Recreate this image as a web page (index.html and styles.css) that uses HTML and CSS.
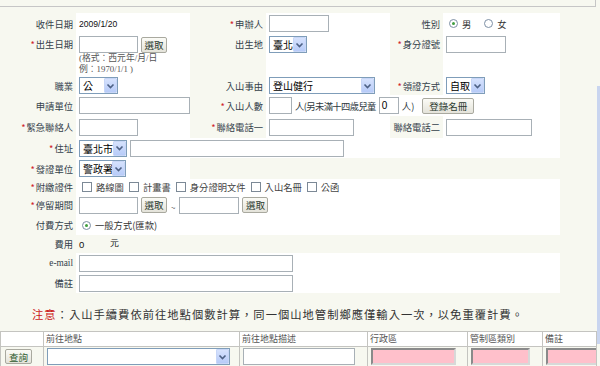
FILE: index.html
```html
<!DOCTYPE html>
<html lang="zh-Hant">
<head>
<meta charset="utf-8">
<title>入山申請</title>
<link rel="stylesheet" href="styles.css">
</head>
<body>
<div class="topbar"></div>
<div class="form">
  <!-- row 1 -->
  <div class="lbl">收件日期</div>
  <div class="cell"><span class="val">2009/1/20</span></div>
  <div class="lbl"><i>*</i>申辦人</div>
  <div class="cell"><span class="in" style="width:60px"></span></div>
  <div class="lbl">性別</div>
  <div class="cell radios"><span class="rad on"></span><span class="rtxt">男</span><span class="rad"></span><span class="rtxt">女</span></div>

  <!-- row 2 -->
  <div class="lbl top"><i>*</i>出生日期</div>
  <div class="cell stack">
    <div class="line"><span class="in" style="width:59px"></span><span class="btn">選取</span></div>
    <div class="note">(格式：西元年/月/日<br>例：1970/1/1 )</div>
  </div>
  <div class="lbl top">出生地</div>
  <div class="cell topc"><span class="sel" style="width:38px"><span class="stxt">臺北</span><span class="arr"><svg width="9" height="6" viewBox="0 0 9 6"><polyline points="1.5,1.5 4.5,4.5 7.5,1.5" fill="none" stroke="#4d6185" stroke-width="1.6"/></svg></span></span></div>
  <div class="lbl top"><i>*</i>身分證號</div>
  <div class="cell topc"><span class="in" style="width:60px"></span></div>

  <!-- row 3 -->
  <div class="lbl">職業</div>
  <div class="cell"><span class="sel" style="width:39px"><span class="stxt">公</span><span class="arr"><svg width="9" height="6" viewBox="0 0 9 6"><polyline points="1.5,1.5 4.5,4.5 7.5,1.5" fill="none" stroke="#4d6185" stroke-width="1.6"/></svg></span></span></div>
  <div class="lbl">入山事由</div>
  <div class="cell"><span class="sel" style="width:106px"><span class="stxt">登山健行</span><span class="arr"><svg width="9" height="6" viewBox="0 0 9 6"><polyline points="1.5,1.5 4.5,4.5 7.5,1.5" fill="none" stroke="#4d6185" stroke-width="1.6"/></svg></span></span></div>
  <div class="lbl"><i>*</i>領證方式</div>
  <div class="cell"><span class="sel" style="width:39px"><span class="stxt">自取</span><span class="arr"><svg width="9" height="6" viewBox="0 0 9 6"><polyline points="1.5,1.5 4.5,4.5 7.5,1.5" fill="none" stroke="#4d6185" stroke-width="1.6"/></svg></span></span></div>

  <!-- row 4 -->
  <div class="lbl">申請單位</div>
  <div class="cell"><span class="in" style="width:111px"></span></div>
  <div class="lbl"><i>*</i>入山人數</div>
  <div class="cell span3"><span class="in" style="width:23px"></span><span class="txt tight">人(另未滿十四歲兒童</span><span class="in num" style="width:20px">0</span><span class="txt">人)</span><span class="btn wide">登錄名冊</span></div>

  <!-- row 5 -->
  <div class="lbl"><i>*</i>緊急聯絡人</div>
  <div class="cell"><span class="in" style="width:59px"></span></div>
  <div class="lbl"><i>*</i>聯絡電話一</div>
  <div class="cell"><span class="in" style="width:85px"></span></div>
  <div class="lbl">聯絡電話二</div>
  <div class="cell"><span class="in" style="width:86px"></span></div>

  <!-- row 6 -->
  <div class="lbl"><i>*</i>住址</div>
  <div class="cell span5"><span class="sel" style="width:48px"><span class="stxt">臺北市</span><span class="arr"><svg width="9" height="6" viewBox="0 0 9 6"><polyline points="1.5,1.5 4.5,4.5 7.5,1.5" fill="none" stroke="#4d6185" stroke-width="1.6"/></svg></span></span><span class="in" style="width:214px"></span></div>

  <!-- row 7 -->
  <div class="lbl"><i>*</i>發證單位</div>
  <div class="cell"><span class="sel" style="width:47px"><span class="stxt">警政署</span><span class="arr"><svg width="9" height="6" viewBox="0 0 9 6"><polyline points="1.5,1.5 4.5,4.5 7.5,1.5" fill="none" stroke="#4d6185" stroke-width="1.6"/></svg></span></span></div>
  <div class="filler"></div>

  <!-- row 8 -->
  <div class="lbl"><i>*</i>附繳證件</div>
  <div class="cell span5 checks">
    <span class="chk"></span><span class="ctxt">路線圖</span>
    <span class="chk"></span><span class="ctxt">計畫書</span>
    <span class="chk"></span><span class="ctxt">身分證明文件</span>
    <span class="chk"></span><span class="ctxt">入山名冊</span>
    <span class="chk"></span><span class="ctxt">公函</span>
  </div>

  <!-- row 9 -->
  <div class="lbl"><i>*</i>停留期間</div>
  <div class="cell span5"><span class="in" style="width:59px"></span><span class="btn">選取</span><span class="tilde">~</span><span class="in" style="width:60px"></span><span class="btn">選取</span></div>

  <!-- row 10 -->
  <div class="lbl">付費方式</div>
  <div class="cell span5 radios"><span class="rad on"></span><span class="rtxt">一般方式(匯款)</span></div>

  <!-- row 11 -->
  <div class="lbl">費用</div>
  <div class="cell span5 plain"><span class="val fee">0</span><span class="val">元</span></div>

  <!-- row 12 -->
  <div class="lbl serif">e-mail</div>
  <div class="cell span5"><span class="in" style="width:214px"></span></div>

  <!-- row 13 -->
  <div class="lbl">備註</div>
  <div class="cell span5"><span class="in" style="width:214px"></span></div>
</div>

<p class="notice"><span class="warn">注意</span>：入山手續費依前往地點個數計算，同一個山地管制鄉應僅輸入一次，以免重覆計費。</p>

<table class="grid">
  <colgroup>
    <col class="c1"><col class="c2"><col class="c3"><col class="c4"><col class="c5"><col class="c6">
  </colgroup>
  <tr class="head">
    <th></th><th>前往地點</th><th>前往地點描述</th><th>行政區</th><th>管制區類別</th><th>備註</th>
  </tr>
  <tr class="body">
    <td><span class="btn q">查詢</span></td>
    <td><span class="sel" style="width:183px"><span class="stxt"></span><span class="arr"><svg width="9" height="6" viewBox="0 0 9 6"><polyline points="1.5,1.5 4.5,4.5 7.5,1.5" fill="none" stroke="#4d6185" stroke-width="1.6"/></svg></span></span></td>
    <td class="p4"><span class="in" style="width:112px"></span></td>
    <td><span class="pink" style="width:85px"></span></td>
    <td class="p4"><span class="pink" style="width:59px"></span></td>
    <td class="p4"><span class="pink" style="width:56px"></span></td>
  </tr>
</table>
<div class="scroll"></div>
</body>
</html>
```
FILE: styles.css
```css
body {
  margin: 0;
  width: 600px;
  height: 366px;
  overflow: hidden;
  position: relative;
  background: #f7f8f0;
  font-family: "Noto Sans CJK TC", "Liberation Sans", sans-serif;
  font-size: 9.3px;
  color: #2f3a42;
}

.topbar {
  height: 6px;
  width: 595px;
  border-bottom: 1px solid #c6c6c6;
  border-right: 1px solid #c6c6c6;
}

.form {
  display: grid;
  grid-template-columns: 76px 114px 76px 124px 53px 117px;
  grid-template-rows: 21px 42px 19px 21px 22px 20px 21px 16px 20px 20px 18px 20px 20px;
  width: 560px;
  margin-top: 6px;
}

.lbl {
  display: flex;
  align-items: center;
  justify-content: flex-end;
  padding-right: 3px;
  white-space: nowrap;
  color: #34414b;
}
.lbl i {
  font-style: normal;
  color: #d0262d;
  margin-right: 1px;
}
.lbl.top {
  align-items: flex-start;
  padding-top: 2px;
  line-height: 17px;
}
.serif {
  font-family: "Liberation Serif", serif;
}

.cell {
  background: #fff;
  display: flex;
  align-items: center;
  gap: 3px;
  padding-left: 3px;
  white-space: nowrap;
  min-width: 0;
}
.cell.topc {
  align-items: flex-start;
  padding-top: 2px;
}
.cell.stack {
  flex-direction: column;
  align-items: flex-start;
  gap: 0;
  padding-top: 2px;
}
.cell.plain {
  background: transparent;
}
.span3 { grid-column: span 3; }
.span5 { grid-column: span 5; }
.filler { grid-column: span 4; }

.line {
  display: flex;
  align-items: center;
  gap: 3px;
}
.note {
  font-family: "Liberation Serif", "Noto Sans CJK TC", serif;
  line-height: 11px;
  color: #555;
  font-size: 8.8px;
  white-space: nowrap;
}

.val {
  font-family: "Liberation Sans", sans-serif;
  font-size: 8.6px;
  color: #111;
}
.val.fee {
  width: 28px;
  font-size: 9.5px;
}

.in {
  display: inline-flex;
  align-items: center;
  box-sizing: border-box;
  height: 17px;
  border: 1px solid #a8b0b6;
  background: #fff;
  flex: none;
}
.in.num {
  padding-left: 2px;
  font-family: "Liberation Sans", sans-serif;
  font-size: 10px;
  color: #000;
}

.sel {
  display: inline-flex;
  align-items: center;
  justify-content: space-between;
  box-sizing: border-box;
  height: 17px;
  border: 1px solid #7f9db9;
  background: #fff;
  flex: none;
  font-size: 10px;
  color: #000;
}
.stxt {
  padding-left: 3px;
  overflow: hidden;
}
.arr {
  display: flex;
  align-items: center;
  justify-content: center;
  width: 13px;
  height: 15px;
  box-sizing: border-box;
  background: linear-gradient(#d6e2fd, #b7cbf8);
  border: 1px solid #c7d6f7;
  border-radius: 1px;
}

.btn {
  display: inline-flex;
  align-items: center;
  justify-content: center;
  box-sizing: border-box;
  height: 16px;
  width: 26px;
  border: 1px solid #a9a99f;
  border-radius: 2px;
  background: linear-gradient(#fbfbf6, #e4e3da);
  font-size: 9.5px;
  color: #2b3a2f;
  flex: none;
}
.btn.wide {
  width: 52px;
  margin-left: 5px;
}
.txt {
  color: #2f3a42;
}
.txt.tight {
  letter-spacing: -0.6px;
}
.tilde {
  font-size: 8px;
  color: #555;
  margin: 4px 1px 0;
}

.radios {
  gap: 0;
}
.rad {
  display: inline-flex;
  align-items: center;
  justify-content: center;
  box-sizing: border-box;
  width: 9px;
  height: 9px;
  border: 1px solid #7d8fa5;
  border-radius: 50%;
  background: #fff;
  margin-left: 3px;
  flex: none;
}
.rad.on::after {
  content: "";
  width: 3px;
  height: 3px;
  border-radius: 50%;
  background: #3f9e3f;
}
.rtxt {
  margin-left: 4px;
  margin-right: 10px;
  color: #333;
}

.checks {
  gap: 0;
}
.chk {
  box-sizing: border-box;
  width: 10px;
  height: 10px;
  border: 1px solid #7c8996;
  background: #fff;
  margin-left: 3px;
  flex: none;
}
.ctxt {
  margin-left: 4px;
  margin-right: 2px;
  color: #444;
}

.notice {
  margin: 13px 0 0;
  padding-left: 32px;
  font-size: 11.3px;
  letter-spacing: 1px;
  line-height: 16px;
  color: #333;
  white-space: nowrap;
}
.warn {
  color: #cc1818;
}

.grid {
  margin-top: 9px;
  border-collapse: collapse;
  table-layout: fixed;
  width: 596px;
}
.c1 { width: 43px; }
.c2 { width: 196px; }
.c3 { width: 128px; }
.c4 { width: 100px; }
.c5 { width: 75px; }
.c6 { width: 54px; }
.grid th, .grid td {
  border: 1px solid #c4c4c0;
  padding: 0;
  text-align: left;
  vertical-align: middle;
  white-space: nowrap;
  overflow: hidden;
}
.grid th {
  height: 14px;
  font-weight: normal;
  font-size: 9px;
  color: #555;
  padding-left: 2px;
  line-height: 14px;
  background: #fff;
}
.grid td {
  height: 19px;
  padding-left: 3px;
}
.grid td.p4 {
  padding-left: 3px;
}
.btn.q {
  width: 27px;
  height: 15px;
  color: #2e5a2e;
  margin-left: 1px;
  vertical-align: middle;
}
.grid .sel, .grid .in {
  vertical-align: middle;
}
.pink {
  display: inline-block;
  vertical-align: middle;
  box-sizing: border-box;
  height: 17px;
  background: #ffc0cb;
  border: 2px solid;
  border-color: #8a8a8a #d8d8d8 #d8d8d8 #8a8a8a;
}

.scroll {
  position: absolute;
  right: 0;
  top: 86px;
  width: 3px;
  height: 258px;
  background: #c9d5ef;
}
```
